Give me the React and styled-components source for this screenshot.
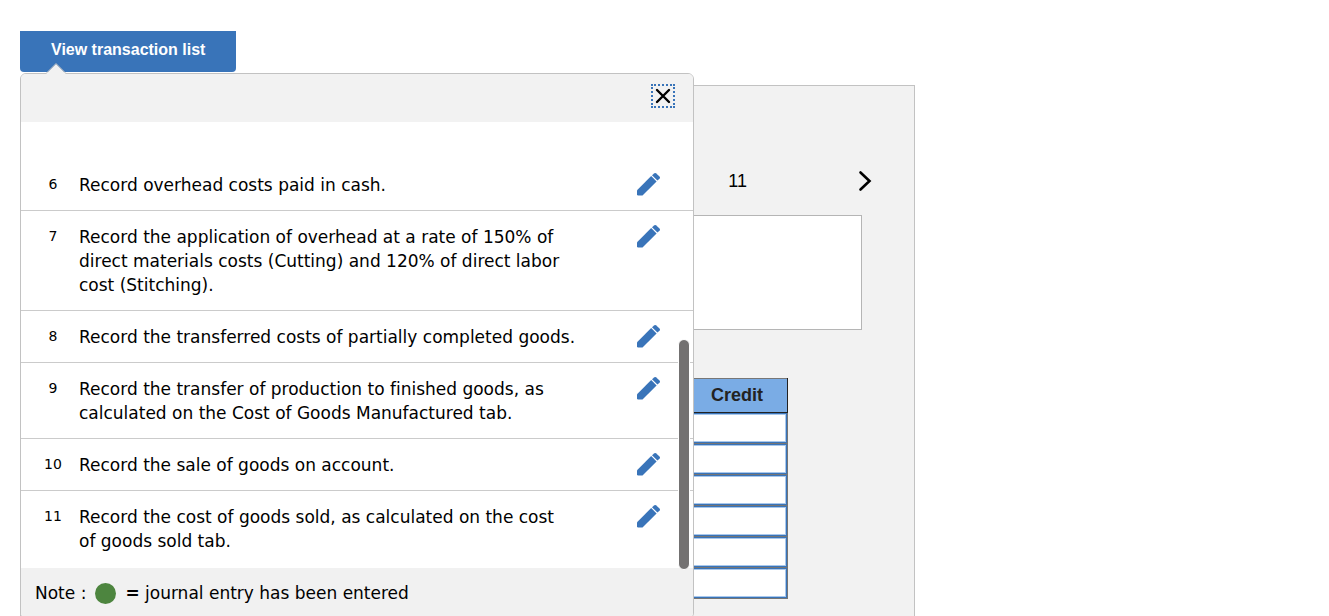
import React from 'react';
import styled, { createGlobalStyle } from 'styled-components';

const GlobalStyle = createGlobalStyle`
  * {
    box-sizing: border-box;
  }

  body {
    margin: 0;
    background-color: #fff;
    color: #000;
    font-family: 'Liberation Sans', Arial, sans-serif;
  }
`;

const Page = styled.main`
  display: flex;
  flex-direction: column;
  align-items: flex-start;
  height: 100vh;
  padding: 31px 20px 0;
  overflow: hidden;
`;

const TabBar = styled.div`
  position: relative;
  z-index: 1;
`;

const TabButton = styled.button`
  display: block;
  height: 41px;
  padding: 0 31px 4px;
  border: none;
  border-radius: 0 0 4px 4px;
  background-color: #3974b9;
  color: #fff;
  font: bold 16px 'Liberation Sans', Arial, sans-serif;
`;

const Popover = styled.section`
  position: absolute;
  top: 42px;
  left: 0;
  width: 674px;
  border: 1px solid #c2c2c2;
  border-radius: 6px;
  background-color: #fff;
  font-family: 'DejaVu Sans', Verdana, sans-serif;
  font-variant-ligatures: none;
`;

const Caret = styled.svg`
  position: absolute;
  top: -12px;
  left: 24px;
`;

const PopoverHeader = styled.header`
  display: flex;
  justify-content: flex-end;
  padding: 10px 18px 14px;
  border-radius: 5px 5px 0 0;
  background-color: #f2f2f2;
`;

const IconButton = styled.button`
  display: flex;
  align-items: center;
  justify-content: center;
  width: 24px;
  height: 24px;
  padding: 0;
  border: none;
  background: none;
`;

const CloseButton = styled(IconButton)`
  border: 2px dotted #3974b9;
`;

const ListArea = styled.div`
  position: relative;
  padding: 37px 0 2px;
`;

const EntryList = styled.ul`
  margin: 0;
  padding: 0;
  list-style: none;
`;

const Entry = styled.li`
  display: flex;
  align-items: flex-start;
  padding: 14px 32px 13px 16px;
  border-bottom: 1px solid #cbcbcb;

  &:last-child {
    border-bottom: none;
  }
`;

const EntryNumber = styled.span`
  flex: none;
  width: 32px;
  margin-right: 10px;
  font-size: 14px;
  line-height: 22px;
  text-align: center;
`;

const EntryText = styled.span`
  flex: 1;
  padding-right: 44px;
  font-size: 17px;
  line-height: 24px;
  white-space: pre-line;
`;

const ScrollThumb = styled.div`
  position: absolute;
  right: 3px;
  bottom: -2px;
  width: 12px;
  height: 231px;
  border: 1px solid #fff;
  border-radius: 6px;
  background-color: #737171;
`;

const PopoverFooter = styled.footer`
  display: flex;
  align-items: center;
  gap: 9px;
  height: 50px;
  padding: 0 14px;
  border-radius: 0 0 5px 5px;
  background-color: #f1f1f1;
  font-size: 17px;
`;

const Dot = styled.span`
  width: 21px;
  height: 21px;
  border-radius: 50%;
  background-color: #4d853f;
`;

const Worksheet = styled.section`
  display: flex;
  flex: 1;
  flex-direction: column;
  align-items: flex-end;
  width: 100%;
  max-width: 895px;
  margin-top: 13px;
  padding: 83px 52px 0;
  border: 1px solid #c2c2c2;
  border-bottom: none;
  background-color: #f2f2f2;
`;

const Steps = styled.nav`
  display: flex;
  align-items: center;
  gap: 106px;
  margin-right: -15px;
`;

const StepLink = styled.a`
  color: #000;
  font-size: 18px;
  text-decoration: none;
`;

const Prompt = styled.div`
  flex: none;
  width: 100%;
  height: 115px;
  margin: 22px 0 48px;
  border: 1px solid #b5b5b5;
  background-color: #fff;
`;

const JournalTable = styled.table`
  margin-right: 74px;
  border-collapse: collapse;
`;

const HeadCell = styled.th`
  width: 101px;
  height: 34px;
  padding: 0;
  border: 1px solid #222;
  border-top-color: #777;
  background-color: #7aace5;
  color: #222;
  font-size: 18px;
`;

const Cell = styled.td`
  height: 31px;
  padding: 0;
  border: 1px solid #757575;
`;

const AmountInput = styled.input`
  display: block;
  width: 100%;
  height: 30px;
  padding: 0 4px;
  border: 1px solid #3974b9;
  border-radius: 0;
  outline: none;
  background-color: #fff;
  box-shadow: inset 0 0 0 1px #a9c8ec;
  font-size: 16px;
`;

const entries = [
  { id: 6, text: 'Record overhead costs paid in cash.' },
  {
    id: 7,
    text: 'Record the application of overhead at a rate of 150% of direct materials costs (Cutting) and 120% of direct labor cost (Stitching).',
  },
  { id: 8, text: 'Record the transferred costs of partially completed goods.' },
  {
    id: 9,
    text: 'Record the transfer of production to finished goods, as calculated on the Cost of Goods Manufactured tab.',
  },
  { id: 10, text: 'Record the sale of goods on account.' },
  {
    id: 11,
    text: 'Record the cost of goods sold, as calculated on the cost\nof goods sold tab.',
  },
];

const creditRows = [1, 2, 3, 4, 5, 6];

const PencilIcon = () => (
  <svg width="24" height="24" viewBox="0 0 24 24" fill="#3974b9">
    <path d="M0 17.2 14.2 3 19.6 8.4 5.5 22.5H1.2Q0 22.5 0 21.3Z" />
    <path d="M15 2.2 17.1.4Q18.2-.5 19.3.5L22.5 3.6Q23.5 4.7 22.5 5.8L20.4 7.6Z" />
  </svg>
);

const App = () => (
  <>
    <GlobalStyle />
    <Page>
      <TabBar>
        <TabButton type="button">View transaction list</TabButton>
        <Popover>
          <Caret width="22" height="13" viewBox="0 0 22 13">
            <path d="M1 12 11 2 21 12V13H1Z" fill="#f2f2f2" />
            <path d="M1 11.5 11 1.5 21 11.5" fill="none" stroke="#c2c2c2" />
          </Caret>
          <PopoverHeader>
            <CloseButton type="button" aria-label="Close">
              <svg width="16" height="16" viewBox="0 0 16 16">
                <path
                  d="M2 2 14 14M14 2 2 14"
                  stroke="#000"
                  strokeWidth="2.4"
                  strokeLinecap="round"
                />
              </svg>
            </CloseButton>
          </PopoverHeader>
          <ListArea>
            <EntryList>
              {entries.map((entry) => (
                <Entry key={entry.id}>
                  <EntryNumber>{entry.id}</EntryNumber>
                  <EntryText>{entry.text}</EntryText>
                  <IconButton type="button" aria-label={`Edit ${entry.id}`}>
                    <PencilIcon />
                  </IconButton>
                </Entry>
              ))}
            </EntryList>
            <ScrollThumb />
          </ListArea>
          <PopoverFooter>
            <span>Note :</span>
            <Dot />
            <span>
              <b>=</b> journal entry has been entered
            </span>
          </PopoverFooter>
        </Popover>
      </TabBar>

      <Worksheet>
        <Steps>
          <StepLink href="#11">11</StepLink>
          <IconButton type="button" aria-label="Next">
            <svg width="14" height="22" viewBox="0 0 14 22">
              <path
                d="M2.5 2.5 11.5 11 2.5 19.5"
                fill="none"
                stroke="#000"
                strokeWidth="2.6"
                strokeLinecap="round"
              />
            </svg>
          </IconButton>
        </Steps>
        <Prompt />
        <JournalTable>
          <thead>
            <tr>
              <HeadCell id="credit">Credit</HeadCell>
            </tr>
          </thead>
          <tbody>
            {creditRows.map((row) => (
              <tr key={row}>
                <Cell>
                  <AmountInput type="text" aria-labelledby="credit" />
                </Cell>
              </tr>
            ))}
          </tbody>
        </JournalTable>
      </Worksheet>
    </Page>
  </>
);

export default App;
